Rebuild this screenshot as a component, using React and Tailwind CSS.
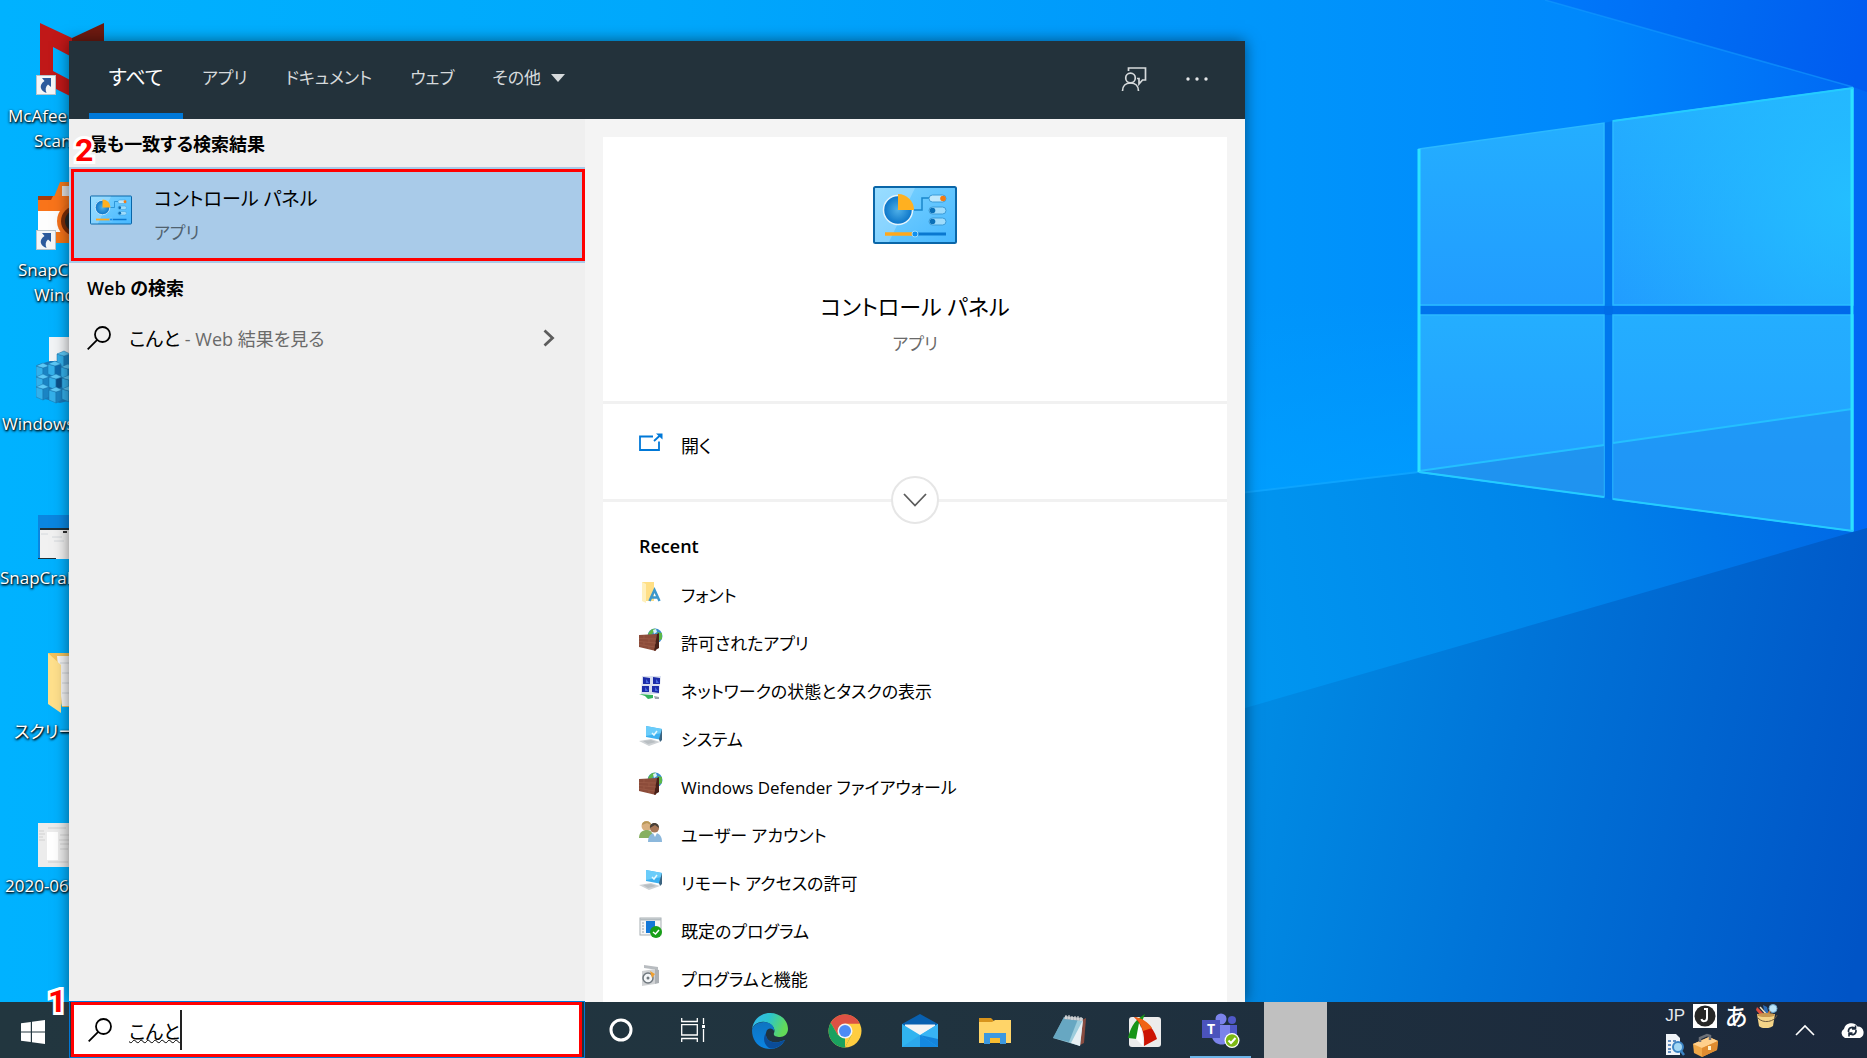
import React from "react";

const FONT = "font-['Open_Sans','Noto_Sans_CJK_JP',sans-serif] [font-feature-settings:'palt']";

function Wallpaper() {
  return (
    <svg
      className="absolute inset-0 h-full w-full"
      viewBox="0 0 1867 1058"
      preserveAspectRatio="xMaxYMin slice"
      aria-hidden="true"
    >
      <defs>
        <linearGradient id="wBase" gradientUnits="userSpaceOnUse" x1="0" y1="0" x2="1867" y2="0">
          <stop offset="0" stopColor="#00b2ff" />
          <stop offset="0.35" stopColor="#00a8fc" />
          <stop offset="0.67" stopColor="#0096fb" />
          <stop offset="0.85" stopColor="#0088fc" />
          <stop offset="1" stopColor="#0068f4" />
        </linearGradient>
        <linearGradient id="wTop" gradientUnits="userSpaceOnUse" x1="1560" y1="0" x2="1860" y2="60">
          <stop offset="0" stopColor="#0078fa" />
          <stop offset="0.6" stopColor="#0068f2" />
          <stop offset="1" stopColor="#005cf0" />
        </linearGradient>
        <linearGradient id="wMid" gradientUnits="userSpaceOnUse" x1="1240" y1="600" x2="1860" y2="480">
          <stop offset="0" stopColor="#0096f0" />
          <stop offset="0.5" stopColor="#0085ea" />
          <stop offset="1" stopColor="#0068e6" />
        </linearGradient>
        <linearGradient id="wLow" gradientUnits="userSpaceOnUse" x1="1240" y1="820" x2="1860" y2="940">
          <stop offset="0" stopColor="#008be4" />
          <stop offset="0.4" stopColor="#0074d8" />
          <stop offset="1" stopColor="#0054c6" />
        </linearGradient>
        <linearGradient id="wGlow" gradientUnits="userSpaceOnUse" x1="0" y1="300" x2="0" y2="490">
          <stop offset="0" stopColor="#00a0ff" stopOpacity="0" />
          <stop offset="1" stopColor="#00a0ff" stopOpacity="0.7" />
        </linearGradient>
        <linearGradient id="wPane" x1="0" y1="0" x2="0" y2="1">
          <stop offset="0" stopColor="#24aeff" />
          <stop offset="1" stopColor="#219cff" />
        </linearGradient>
        <radialGradient id="wShine" gradientUnits="userSpaceOnUse" cx="1850" cy="200" r="260">
          <stop offset="0" stopColor="#24c4ff" stopOpacity="0.8" />
          <stop offset="1" stopColor="#24c4ff" stopOpacity="0" />
        </radialGradient>
      </defs>
      <rect width="1867" height="1058" fill="url(#wBase)" />
      <path d="M1545 0H1867V92L1853 87Z" fill="url(#wTop)" />
      <path d="M1100 300L1418 306V473L1100 510Z" fill="url(#wGlow)" />
      <path d="M1100 510L1418 473L1853 532L1867 528V1058H1100Z" fill="url(#wMid)" />
      <path d="M1100 750L1853 532L1867 528V1058H1100Z" fill="url(#wLow)" />
      <path d="M1545 0L1853 87" stroke="#139bff" strokeWidth="1.5" opacity="0.6" />
      <path d="M1604 123L1613 121V500L1604 498Z" fill="#0070e4" opacity="0.6" />
      <path d="M1418 306H1853V315H1418Z" fill="#0068e6" opacity="0.7" />
      <g fill="url(#wPane)" stroke="#2bb9ff" strokeWidth="1.5">
        <path d="M1419 149L1604 123V305H1419Z" />
        <path d="M1613 121L1853 88V305H1613Z" />
        <path d="M1419 315H1604V497L1419 472Z" />
        <path d="M1613 315H1853V531L1613 499Z" />
      </g>
      <path d="M1613 121L1853 88V305H1613Z" fill="url(#wShine)" />
      <path d="M1419 471L1604 446V497Z" fill="#1e8ee8" opacity="0.65" />
      <path d="M1613 443L1853 409V531L1613 499Z" fill="#1e8ef0" opacity="0.55" />
      <path d="M1240 493L1419 472" stroke="#16aaff" strokeWidth="2" opacity="0.6" />
      <path d="M1419 471L1604 445M1613 443L1852 409" stroke="#24c0ff" strokeWidth="2" />
      <path d="M1419 149V472M1852 88V531" stroke="#2ce2ff" strokeWidth="3" />
      <path d="M1419 472L1604 497M1613 499L1853 531M1613 121L1853 88" stroke="#24ccff" strokeWidth="2" fill="none" />
    </svg>
  );
}

function ShortcutArrow() {
  return (
    <svg x="0" y="0" width="20" height="20" viewBox="0 0 20 20">
      <rect x="0.5" y="0.5" width="19" height="19" fill="#f4f6f8" stroke="#b8c4cc" />
      <path d="M6 3H15V12L12 9.500C9.500 11.500 9 14.500 10.500 18C4 15.500 2.500 10 8.500 6Z" fill="#2c5a9c" />
    </svg>
  );
}

function McAfeeIcon() {
  return (
    <svg width="70" height="74" viewBox="0 0 70 74">
      <path d="M4 0L36 15V34L17 24V48L36 58V74L4 58Z" fill="#c01818" />
      <path d="M36 15L68 0V58L36 74V58L55 48V24L36 34Z" fill="#6e1a10" />
      <g transform="translate(0 52)"><ShortcutArrow /></g>
    </svg>
  );
}

function CameraIcon() {
  return (
    <svg width="70" height="70" viewBox="0 0 70 70">
      <path d="M18 16L24 1H40V16Z" fill="#f47a1c" />
      <rect x="26" y="5" width="12" height="12" fill="#e0e0e0" />
      <path d="M2 15H70V32H2Z" fill="#f9741a" />
      <path d="M2 15H17L15 19H2Z" fill="#a83c08" />
      <path d="M2 30H70V62H2Z" fill="#fdfdfd" />
      <path d="M20 51H70V62H20Z" fill="#f47416" />
      <circle cx="40" cy="40" r="19" fill="#f4701a" />
      <circle cx="40" cy="40" r="15" fill="#7a2c08" />
      <circle cx="40" cy="40" r="11" fill="#262626" />
      <g transform="translate(0 49)"><ShortcutArrow /></g>
    </svg>
  );
}

function Cube({ x, y, c = "#1a84c4" }) {
  return (
    <g transform={`translate(${x} ${y})`} stroke="#1a74ac" strokeWidth="0.5">
      <path d="M0 3L7 5V16L0 13Z" fill="#34b0ea" />
      <path d="M7 5L13 3V13L7 16Z" fill={c} />
      <path d="M0 3L7 0L13 3L7 5Z" fill="#5cc8f6" />
    </g>
  );
}

function RegistryIcon() {
  return (
    <svg width="70" height="68" viewBox="0 0 70 68">
      <path d="M13 0H62V60H13Z" fill="#f2f4f6" />
      <path d="M1 28L14 24H40V62L24 66L1 60Z" fill="#1878b8" />
      <Cube x="21" y="14" />
      <Cube x="0" y="26" /><Cube x="12" y="24" c="#0f6cb0" /><Cube x="25" y="27" />
      <Cube x="0" y="37" /><Cube x="13" y="37" c="#0b4f88" /><Cube x="26" y="38" c="#1470b0" />
      <Cube x="0" y="47" /><Cube x="13" y="50" /><Cube x="26" y="49" c="#0f6cb0" />
    </svg>
  );
}

function ShotThumb() {
  return (
    <svg width="60" height="44" viewBox="0 0 60 44">
      <rect width="60" height="44" fill="#0a86e0" />
      <rect x="2" y="13" width="58" height="31" fill="#f1f1f1" />
      <rect x="2" y="13" width="58" height="2" fill="#203038" />
      <rect x="25" y="16" width="4" height="2" fill="#303030" />
      <path d="M3 19H10M14 22H24M16 26H26" stroke="#d4d8dc" />
      <rect y="43" width="18" height="1" fill="#203038" />
    </svg>
  );
}

function FolderIcon() {
  return (
    <svg width="48" height="60" viewBox="0 0 48 60">
      <path d="M0 0H46V54H14Z" fill="#f2c25c" />
      <path d="M9 3H46V53H14Z" fill="#f5f5f5" />
      <path d="M12 10H30M14 20H30M14 30H30M14 40H30" stroke="#cfd4d8" />
      <path d="M0 0L13 12V60L0 51Z" fill="#ffe08c" />
    </svg>
  );
}

function DocThumb() {
  return (
    <svg width="60" height="44" viewBox="0 0 60 44">
      <rect width="60" height="44" fill="#ececec" />
      <rect x="9" y="9" width="11" height="28" fill="#fff" />
      <path d="M1 8H6M1 11H7M1 14H5M1 17H7M10 5H28M22 12H34M21 17H34M22 21H34M22 26H30M10 39H30" stroke="#d0d0d0" />
    </svg>
  );
}

const desktopIcons = [
  { lines: ["McAfee Security", "Scan Plus"], pads: ["pl-2", "pl-[34px]"], icon: <McAfeeIcon />, left: "pl-9" },
  { lines: ["SnapCrab for", "Windows"], pads: ["pl-[18px]", "pl-[34px]"], icon: <CameraIcon />, left: "pl-9" },
  { lines: ["Windows 10"], pads: ["pl-[2px]"], icon: <RegistryIcon />, left: "pl-9" },
  { lines: ["SnapCrab_N"], pads: ["pl-0"], icon: <ShotThumb />, left: "pl-[38px]" },
  { lines: ["スクリーンショット"], pads: ["pl-[14px]"], icon: <FolderIcon />, left: "pl-12" },
  { lines: ["2020-06-24"], pads: ["pl-[5px]"], icon: <DocThumb />, left: "pl-[38px]" },
];

function DesktopIcons() {
  return (
    <ul className="relative flex w-[110px] flex-col overflow-hidden pt-[18px]">
      {desktopIcons.map((d) => (
        <li key={d.lines[0]} className="flex h-[154px] flex-col">
          <div className={`flex h-[85px] items-end pb-[6px] ${d.left}`}>
            <div className="shrink-0">{d.icon}</div>
          </div>
          {d.lines.map((l, i) => (
            <span
              key={l}
              className={`whitespace-nowrap text-[17px] leading-[25px] text-white [text-shadow:1px_1px_2px_#000,0_1px_3px_#000] ${d.pads[i]}`}
            >
              {l}
            </span>
          ))}
        </li>
      ))}
    </ul>
  );
}

function ControlPanelIcon({ className }) {
  return (
    <svg className={className} viewBox="0 0 84 58" aria-hidden="true">
      <defs>
        <linearGradient id="cpBg" x1="0" y1="0" x2="1" y2="1">
          <stop offset="0" stopColor="#7ed4ff" />
          <stop offset="1" stopColor="#48b8ff" />
        </linearGradient>
        <radialGradient id="cpPie">
          <stop offset="0" stopColor="#4fb0e8" />
          <stop offset="1" stopColor="#0a74c8" />
        </radialGradient>
      </defs>
      <rect x="1" y="1" width="82" height="56" rx="1.500" fill="url(#cpBg)" stroke="#0a66a8" strokeWidth="2" />
      <path d="M2 2H42L16 56H2Z" fill="#fff" opacity="0.22" />
      <circle cx="25" cy="24" r="14.500" fill="url(#cpPie)" stroke="#e4f4fc" strokeWidth="1.500" />
      <path d="M25 24V8A16 16 0 0 1 41 24Z" fill="#ffb020" />
      <path d="M41 24H49V12H56" stroke="#1a86cc" strokeWidth="1.500" fill="none" />
      <g stroke="#3c9cd8" strokeWidth="1">
        <rect x="56" y="9" width="17" height="7" rx="3.500" fill="#bfe8fc" />
        <rect x="56" y="21" width="17" height="7" rx="3.500" fill="#9edcfc" />
        <rect x="56" y="32" width="17" height="7" rx="3.500" fill="#9edcfc" />
      </g>
      <circle cx="70" cy="12.500" r="2.800" fill="#f47a10" />
      <circle cx="59.500" cy="24.500" r="2.800" fill="#0a70b8" />
      <circle cx="59.500" cy="35.500" r="2.800" fill="#0a70b8" />
      <path d="M12 48H42" stroke="#ffa81c" strokeWidth="3.500" />
      <path d="M42 48H73" stroke="#0a78d0" strokeWidth="3" />
      <circle cx="42" cy="48" r="3" fill="#1090f0" stroke="#9edcfc" />
    </svg>
  );
}

function SearchIcon() {
  return (
    <svg className="h-6 w-6 shrink-0" viewBox="0 0 24 24" fill="none" stroke="#000" strokeWidth="1.800" aria-hidden="true">
      <circle cx="15.500" cy="8.500" r="7.500" />
      <path d="M10.200 13.800L0.700 23.300" />
    </svg>
  );
}

function StepMark({ children }) {
  return (
    <span
      aria-hidden="true"
      className="block font-['Roboto',sans-serif] text-[32px] font-bold leading-[30px] text-[#ff0000] [-webkit-text-stroke:6px_#fff] [paint-order:stroke_fill]"
    >
      {children}
    </span>
  );
}

const tabs = ["すべて", "アプリ", "ドキュメント", "ウェブ"];

function PanelHeader() {
  return (
    <header className="flex h-[78px] shrink-0 items-stretch bg-[#23323b] pl-5 pr-9 text-[17px] text-[#d6dadc]">
      <nav className="flex flex-1">
        {tabs.map((t, i) => (
          <button
            key={t}
            type="button"
            className={
              i === 0
                ? "w-[94px] border-b-[6px] border-[#0078d7] pt-[2px] text-xl text-white"
                : "border-b-[6px] border-transparent px-[19px] pt-[2px]"
            }
          >
            {t}
          </button>
        ))}
        <button type="button" className="flex items-center gap-[10px] border-b-[6px] border-transparent px-[19px] pt-[2px]">
          その他
          <svg width="14" height="8" viewBox="0 0 14 8"><path d="M0 0H14L7 8Z" fill="#d6dadc" /></svg>
        </button>
      </nav>
      <div className="flex items-center gap-[38px] pb-[2px]">
        <button type="button" aria-label="フィードバック">
          <svg width="26" height="26" viewBox="0 0 26 26" fill="none" stroke="#d6dadc" strokeWidth="1.700">
            <circle cx="9.500" cy="12" r="4.800" />
            <path d="M1.500 25C1.500 20 4.800 17 9.500 17S17.500 20 17.500 25M7.500 5V2H24.500V14H21.500L18 18V12.500H16" />
          </svg>
        </button>
        <button type="button" aria-label="オプション">
          <svg width="24" height="6" viewBox="0 0 24 6" fill="#e4e6e8">
            <circle cx="3" cy="3" r="1.700" /><circle cx="12" cy="3" r="1.700" /><circle cx="21" cy="3" r="1.700" />
          </svg>
        </button>
      </div>
    </header>
  );
}

function ResultsPane() {
  return (
    <section className="w-[516px] shrink-0 bg-[#efefef]">
      <div className="relative">
        <h2 className="h-12 pl-5 text-lg font-bold leading-[50px]">最も一致する検索結果</h2>
        <div className="absolute left-[6px] top-4"><StepMark>2</StepMark></div>
      </div>
      <div className="bg-[#a9cbe9] py-[2px] pl-[2px]">
        <button type="button" className="flex h-[92px] w-full items-center gap-[22px] border-[3px] border-[#ff0000] pl-4 text-left">
          <ControlPanelIcon className="mb-[10px] h-[30px] w-[42px]" />
          <span className="flex flex-col">
            <span className="text-[19px] leading-9">コントロール パネル</span>
            <span className="text-[17px] leading-8 text-[#50626f]">アプリ</span>
          </span>
        </button>
      </div>
      <h2 className="h-12 pl-[18px] text-lg font-semibold leading-[50px]">Web の検索</h2>
      <button type="button" className="flex h-[54px] w-full items-center pl-[18px] pr-[30px] text-left">
        <SearchIcon />
        <span className="flex-1 pl-[18px] pt-[2px] text-[19px]">
          こんと <span className="text-lg text-[#6a6a6a]">- Web 結果を見る</span>
        </span>
        <svg width="12" height="18" viewBox="0 0 12 18" fill="none" stroke="#5c5c5c" strokeWidth="2.800">
          <path d="M1.500 1.500L9.500 9L1.500 16.500" />
        </svg>
      </button>
    </section>
  );
}

function FontsIcon() {
  return (
    <svg width="24" height="24" viewBox="0 0 24 24">
      <path d="M3 2H15V21H3Z" fill="#ffdf85" />
      <path d="M3 2L7 4V23L3 21Z" fill="#fff0bd" />
      <path d="M10.500 21L15.500 10L20.500 21M12.500 17.500H18.500" fill="none" stroke="#3c98cc" strokeWidth="2.500" />
    </svg>
  );
}
function FirewallIcon() {
  return (
    <svg width="24" height="24" viewBox="0 0 24 24">
      <circle cx="16" cy="8" r="7.500" fill="#3a8cd0" />
      <path d="M9 6C11 1 15 0 17 1L14 5L11 8ZM18 4L23 5V11L19 13L20 8Z" fill="#5cb848" />
      <path d="M14 2L17 1L18 4L15 6Z" fill="#d8f0fa" />
      <path d="M0 7L18 6L17 23L0 19Z" fill="#8c4c3a" />
      <path d="M18 6L20 5V20L15 23Z" fill="#482018" />
      <path d="M0 10.500L17 11M0 13.500L17 15M0 16.500L16 19M5 7V11M10 11V15M5 14V17M10 18V21" stroke="#9c5c48" strokeWidth="0.800" />
    </svg>
  );
}
function NetworkIcon() {
  return (
    <svg width="24" height="24" viewBox="0 0 24 24">
      <path d="M3 0H22L20 18H2Z" fill="#c8d0e8" opacity="0.7" />
      <path d="M4 1L11 2V8L4 8ZM14 1L21 2V8L14 8ZM3 10L10 10V16L3 16ZM13 10L20 10V17L13 16Z" fill="#1c2ca8" />
      <path d="M7 3L10 7H7ZM17 3L20 7H17ZM6 11L9 15H6ZM16 11L19 15H16Z" fill="#4868e0" />
      <path d="M0 18L14 19V22L9 23L6 20Z" fill="#34b45c" />
      <path d="M15 20L20 21V23L16 23Z" fill="#9ca4ac" />
    </svg>
  );
}
function SystemIcon() {
  return (
    <svg width="24" height="24" viewBox="0 0 24 24">
      <path d="M7 2L23 5V16L7 13Z" fill="#3cb0f0" />
      <path d="M7 2L23 5V9L7 12Z" fill="#6accfa" />
      <path d="M13 9L15 11L18 7" stroke="#e4f8ff" strokeWidth="1.500" fill="none" />
      <path d="M23 5V16L21 18L20 15Z" fill="#3c6480" />
      <path d="M0 17L12 15L21 18L10 22Z" fill="#cfd3d6" />
      <path d="M4 17L12 16L17 18L9 20Z" fill="#b8bec2" />
    </svg>
  );
}
function UsersIcon() {
  return (
    <svg width="24" height="24" viewBox="0 0 24 24">
      <circle cx="7.500" cy="6" r="5" fill="#d8b080" />
      <path d="M3 5C3 0 12 0 12 5L8 3Z" fill="#b89858" />
      <path d="M0 18C0 12 4 10 8 10S14 13 14 18Z" fill="#86b060" />
      <circle cx="15.500" cy="8" r="4.600" fill="#a87858" />
      <path d="M11 8C10 2 20 1 20 8L16 5Z" fill="#484038" />
      <path d="M9 22C9 16 12 13 16 13S23 16 23 22Z" fill="#8cb8dc" />
      <path d="M14 13L16 17L18 13Z" fill="#fff" />
    </svg>
  );
}
function DefaultsIcon() {
  return (
    <svg width="24" height="24" viewBox="0 0 24 24">
      <rect x="1" y="2" width="21" height="17" fill="#f6f6f6" stroke="#a8b0b4" />
      <path d="M1 3.500H22" stroke="#b4bcc0" strokeWidth="2" />
      <path d="M3 7H5M3 10H5M3 13H5M3 16H5" stroke="#98a4ac" />
      <rect x="7" y="5" width="9" height="12" fill="#1478d8" />
      <circle cx="17" cy="16" r="6" fill="#18a018" />
      <path d="M14 16L16.500 18L20 14" stroke="#fff" strokeWidth="1.500" fill="none" />
    </svg>
  );
}
function ProgramsIcon() {
  return (
    <svg width="24" height="24" viewBox="0 0 24 24">
      <path d="M5 1L19 3V6L5 4Z" fill="#b8bcc0" />
      <path d="M3 7L16 5V20L3 22Z" fill="#d0d2d4" />
      <path d="M16 5L20 6V19L16 20Z" fill="#acb0b4" />
      <circle cx="9" cy="14" r="5" fill="#f4f6f8" stroke="#70787e" strokeWidth="1.500" />
      <circle cx="9" cy="14" r="1.500" fill="#70787e" />
      <path d="M11 7L16 10L13 14Z" fill="#f0a030" />
    </svg>
  );
}

const recent = [
  ["フォント", FontsIcon],
  ["許可されたアプリ", FirewallIcon],
  ["ネットワークの状態とタスクの表示", NetworkIcon],
  ["システム", SystemIcon],
  ["Windows Defender ファイアウォール", FirewallIcon],
  ["ユーザー アカウント", UsersIcon],
  ["リモート アクセスの許可", SystemIcon],
  ["既定のプログラム", DefaultsIcon],
  ["プログラムと機能", ProgramsIcon],
];

function DetailPane() {
  return (
    <section className="flex min-w-0 flex-1 flex-col bg-[#f4f4f4] px-[18px] pt-[18px]">
      <div className="flex flex-1 flex-col bg-white">
        <div className="flex h-[264px] shrink-0 flex-col items-center pt-[49px]">
          <ControlPanelIcon className="h-[58px] w-[84px]" />
          <h1 className="mt-11 text-[22px] leading-9">コントロール パネル</h1>
          <p className="mt-1 text-[17px] leading-8 text-[#6a6a6a]">アプリ</p>
        </div>
        <div className="relative h-[101px] shrink-0 border-y-[3px] border-[#f1f1f1]">
          <button type="button" className="flex h-[84px] w-full items-center gap-[18px] pl-9 text-lg">
            <svg className="mb-2" width="24" height="18" viewBox="0 0 24 18" fill="none" stroke="#0078d7" strokeWidth="1.800">
              <path d="M14 3.500H1V17H20V8.500M15 8L21.500 2" />
              <path d="M17 0.500H23.500V6.500Z" fill="#0078d7" stroke="none" />
            </svg>
            開く
          </button>
          <button
            type="button"
            aria-label="展開"
            className="absolute -bottom-[25px] left-1/2 flex h-12 w-12 -translate-x-1/2 items-center justify-center rounded-full border-2 border-[#e6e6e6] bg-white"
          >
            <svg width="24" height="14" viewBox="0 0 24 14" fill="none" stroke="#5c5c5c" strokeWidth="1.800">
              <path d="M1 1L12 12.500L23 1" />
            </svg>
          </button>
        </div>
        <h2 className="pl-9 pt-7 text-lg font-semibold leading-8">Recent</h2>
        <ul className="flex flex-col pt-[10px]">
          {recent.map(([label, Icon]) => (
            <li key={label}>
              <button type="button" className="flex h-12 w-full items-center gap-[18px] pl-9 text-left text-[17px]">
                <span className="mb-2"><Icon /></span>
                {label}
              </button>
            </li>
          ))}
        </ul>
      </div>
    </section>
  );
}

function EdgeIcon() {
  return (
    <svg width="36" height="36" viewBox="0 0 36 36">
      <defs>
        <linearGradient id="edA" x1="0" y1="0" x2="1" y2="0.300">
          <stop offset="0" stopColor="#34b8f4" /><stop offset="0.500" stopColor="#2cc4cc" /><stop offset="1" stopColor="#62da58" />
        </linearGradient>
        <linearGradient id="edB" x1="0" y1="0" x2="0" y2="1">
          <stop offset="0" stopColor="#0e74c0" /><stop offset="1" stopColor="#0a84e4" />
        </linearGradient>
      </defs>
      <path d="M0 17C1 6 9 0 18 0C29 0 36 8 36 16C36 21 32 24 28 24C24 24 21 23 22 20C24 16 20 10 13 9C6 8 1 12 0 17Z" fill="url(#edA)" />
      <path d="M0 17C1 12 6 9 12 9C19 9 23 14 22 18C21 15 15 14 14 20C13 27 20 31 27 29L33 27C30 33 24 36 18 36C7 36 0 28 0 17Z" fill="url(#edB)" />
      <path d="M14 20C13 27 20 31 27 29L33 27C29 34 21 37 17 35C11 31 11 24 14 20Z" fill="#0a4c98" />
    </svg>
  );
}
function ChromeIcon() {
  return (
    <svg width="34" height="34" viewBox="0 0 34 34">
      <circle cx="17" cy="17" r="16.500" fill="#ffcd40" />
      <path d="M2.700 8.800A16.500 16.500 0 0 1 31.300 8.800L31.800 9.800H17L9.900 21Z" fill="#dd5144" />
      <path d="M2.700 8.800A16.500 16.500 0 0 0 17 33.500L23.500 21L17 24L9.900 21Z" fill="#1aa15f" />
      <path d="M17 33.500L23.700 20.500L17 24Z" fill="#ffcd40" />
      <circle cx="17" cy="17" r="7.500" fill="#f4f4f4" />
      <circle cx="17" cy="17" r="6" fill="#4c8bf5" />
    </svg>
  );
}
function MailIcon() {
  return (
    <svg width="36" height="34" viewBox="0 0 36 34">
      <path d="M0 10L18 0L36 10V20H0Z" fill="#0860b0" />
      <path d="M3 10.500H33V24H3Z" fill="#f4f4f4" />
      <path d="M0 10L18 21L36 10V33H0Z" fill="#30b4f0" />
      <path d="M18 21.500L36 10V33Z" fill="#38b4f4" />
      <path d="M18 21L36 33H0Z" fill="#2ca8ec" />
      <path d="M18 21L36 33V25Z" fill="#1484dc" />
      <path d="M18 21L36 33H18Z" fill="#1488e0" />
    </svg>
  );
}
function ExplorerIcon() {
  return (
    <svg width="32" height="28" viewBox="0 0 32 28">
      <path d="M0 1H12L15 4V8H0Z" fill="#d8941c" />
      <path d="M0 5H13L16 3H32V26H0Z" fill="#ffd468" />
      <path d="M5 16H27V27H21V21H11V27H5Z" fill="#3c98e0" />
      <path d="M11 21H21V26H11Z" fill="#f8bc30" />
    </svg>
  );
}
function NotepadIcon() {
  return (
    <svg width="34" height="32" viewBox="0 0 34 32">
      <path d="M29 5L33 3L31 28L27 30Z" fill="#884c40" />
      <path d="M11 2L30 4L27 31L0 23Z" fill="#9cccdc" />
      <path d="M11 2L25 4L16 27L0 23Z" fill="#4c94b4" opacity="0.650" />
      <path d="M30 5L27 31L18 28Z" fill="#e8f0f4" />
      <path d="M12 1L30 3L30 6L11 4Z" fill="#b8bcc0" />
      <path d="M13 0V4M16 0V4M19 1V5M22 1V5M25 1V5M28 2V6" stroke="#e8e8e8" strokeWidth="1" />
    </svg>
  );
}
function CaptureIcon() {
  return (
    <svg width="34" height="34" viewBox="0 0 34 34">
      <rect x="1" y="3" width="32" height="30" rx="3" fill="#ececec" />
      <path d="M0 24C2 15 6 7 14 2L17 0L15 5L9 25Z" fill="#189418" />
      <path d="M6 3C14 4 25 11 29 25L16 32C17 20 14 10 6 3Z" fill="#cc1404" />
      <path d="M6 3C14 4 20 8 24 14L15 17C13 10 10 6 6 3Z" fill="#f06414" />
      <path d="M11 9C14 14 15 24 15 32L8 25Z" fill="#fff" />
    </svg>
  );
}
function TeamsIcon() {
  return (
    <svg width="38" height="36" viewBox="0 0 38 36">
      <circle cx="19" cy="6" r="5.500" fill="#7b83eb" />
      <circle cx="30" cy="7" r="4" fill="#5059c9" />
      <path d="M25 12H35V22C35 27 30 29 25 26Z" fill="#5059c9" />
      <path d="M10 12H28V24C28 34 12 34 10 24Z" fill="#7b83eb" />
      <rect y="7" width="18" height="18" fill="#4b53bc" />
      <text x="9" y="21" textAnchor="middle" fontFamily="Open Sans" fontWeight="700" fontSize="14" fill="#fff">T</text>
      <circle cx="30" cy="27.500" r="7.500" fill="#fff" />
      <circle cx="30" cy="27.500" r="6.200" fill="#7cb814" />
      <path d="M26.500 27.500L29 30L33.500 25" fill="none" stroke="#fff" strokeWidth="2" />
    </svg>
  );
}
function TaskViewIcon() {
  return (
    <svg width="24" height="24" viewBox="0 0 24 24" fill="none" stroke="#fff" strokeWidth="1.300">
      <path d="M0.700 0V3.500H16.300V0M0.700 24V20.500H16.300V24M0.700 6.700H16.300V17H0.700ZM22.500 0V6M22.500 11V24" />
      <path d="M21 7H24V10H21Z" fill="#fff" stroke="none" />
    </svg>
  );
}

const apps = [
  ["Microsoft Edge", EdgeIcon],
  ["Google Chrome", ChromeIcon],
  ["メール", MailIcon],
  ["エクスプローラー", ExplorerIcon],
  ["メモ帳", NotepadIcon],
  ["キャプチャ", CaptureIcon],
];

function Tray() {
  return (
    <div className="ml-auto flex items-center">
      <div className="flex flex-col gap-[5px] pt-px">
        <div className="flex h-6 items-center gap-2">
          <span className="font-['Liberation_Sans',sans-serif] text-[17px] text-[#e4e8ec]">JP</span>
          <svg width="24" height="24" viewBox="0 0 24 24">
            <rect width="24" height="24" fill="#fff" />
            <circle cx="12" cy="12" r="10.500" fill="#262626" />
            <path d="M14 5V14C14 18 9 18 8.500 15M11 5H15" stroke="#fff" strokeWidth="2" fill="none" />
          </svg>
          <span className="w-[22px] text-[23px] font-medium leading-6 text-white">あ</span>
          <svg width="24" height="24" viewBox="0 0 24 24">
            <path d="M2 3L10 11L7 13L1 6Z" fill="#e04c3c" /><path d="M8 1L12 3L14 11L10 11Z" fill="#2c6cb8" />
            <path d="M5 3L12 11" stroke="#f0e0c0" strokeWidth="1.500" />
            <circle cx="18" cy="4.500" r="4" fill="#bce4f8" stroke="#6ca8d0" /><path d="M15 7L12 12" stroke="#c87838" strokeWidth="2" />
            <path d="M2 10H20L18 22C14 25 7 25 4 22Z" fill="#f4d488" />
            <ellipse cx="11" cy="11" rx="9" ry="2" fill="#c89850" />
            <path d="M3 14C8 20 20 18 22 11" fill="none" stroke="#705c40" />
          </svg>
        </div>
        <div className="flex h-6 gap-2">
          <svg width="20" height="24" viewBox="0 0 20 24">
            <path d="M1 1H11L15 5V22H1Z" fill="#f0f4f8" />
            <path d="M3 8H6M8 8H11M3 12H6M3 16H6M3 19H6" stroke="#3870b0" strokeWidth="1.500" />
            <circle cx="13" cy="14" r="5" fill="#a4d8f4" stroke="#3c84c4" strokeWidth="2" />
            <path d="M16 18L19 22" stroke="#3c84c4" strokeWidth="2.500" />
          </svg>
          <svg width="25" height="24" viewBox="0 0 25 24">
            <path d="M0 11L16 4L25 8L24 17L9 24L1 20Z" fill="#f0a848" />
            <path d="M0 11L16 4L25 8L9 15Z" fill="#ffd08c" />
            <path d="M9 15L25 8L24 17L9 24Z" fill="#e08c30" />
            <path d="M7 9V5L14 2L17 3V7" stroke="#6c7078" strokeWidth="2.500" fill="none" />
            <path d="M15 13H18V17H15Z" fill="#fff0c8" />
          </svg>
        </div>
      </div>
      <button type="button" aria-label="隠れているインジケーターを表示" className="ml-4">
        <svg width="20" height="12" viewBox="0 0 20 12" fill="none" stroke="#fff" strokeWidth="1.600"><path d="M1 11L10 2L19 11" /></svg>
      </button>
      <button type="button" aria-label="同期" className="ml-[25px] mr-[2px]">
        <svg width="25" height="17" viewBox="0 0 25 17">
          <path d="M5 16A5 5 0 0 1 4 7A7.500 7.500 0 0 1 17.500 4.500A6 6 0 0 1 20 16Z" fill="#fff" />
          <path d="M8.500 10C8 6 12 4 15 6.500M15.500 3.500V7H12M16 8C16.500 12 12.500 14 9.500 11.500M9 14.500V11H12.500" fill="none" stroke="#1c2a3c" strokeWidth="1.600" />
        </svg>
      </button>
    </div>
  );
}

function Taskbar() {
  return (
    <footer className="relative flex h-14 shrink-0 items-stretch bg-gradient-to-r from-[#22363f] via-[#20333f] to-[#1b283c]">
      <div className="relative flex w-[69px] shrink-0">
        <button type="button" aria-label="スタート" className="flex flex-1 items-center justify-center pr-1 pt-1">
          <svg className="shrink-0" width="24" height="24" viewBox="0 0 24 24" fill="#fff">
            <path d="M0 3.300L9.800 2V11.400H0ZM11 1.800L24 0V11.400H11ZM0 12.600H9.800V22L0 20.700ZM11 12.600H24V24L11 22.200Z" />
          </svg>
        </button>
        <div className="absolute -top-4 left-12"><StepMark>1</StepMark></div>
      </div>
      <label className="-mt-px flex w-[516px] shrink-0 border border-[#0078d7] pl-px pr-[2px]">
        <span className="flex flex-1 items-center border-[3px] border-[#ff0000] bg-white pl-[14px]">
          <span className="sr-only">検索</span>
          <SearchIcon />
          <input
            type="text"
            defaultValue="こんと"
            className="ml-[17px] bg-transparent p-0 pt-1 text-[19px] leading-9 text-black underline decoration-wavy decoration-1 underline-offset-0 outline-none [field-sizing:content]"
          />
          <span className="h-10 w-[2px] bg-[#222]" />
        </span>
      </label>
      <button type="button" aria-label="Cortana" className="flex w-[72px] shrink-0 items-center justify-center">
        <svg width="24" height="24" viewBox="0 0 24 24"><circle cx="12" cy="12" r="10" fill="none" stroke="#fff" strokeWidth="3" /></svg>
      </button>
      <button type="button" aria-label="タスク ビュー" className="mr-[3px] flex w-[72px] shrink-0 items-center justify-center"><TaskViewIcon /></button>
      {apps.map(([name, Icon]) => (
        <button key={name} type="button" aria-label={name} className="flex w-[75px] shrink-0 items-center justify-center pt-px"><Icon /></button>
      ))}
      <button type="button" aria-label="Microsoft Teams" className="ml-2 mr-[13px] flex w-[61px] shrink-0 items-center justify-center border-b-2 border-[#6cb4e8] pt-1">
        <TeamsIcon />
      </button>
      <div className="w-[63px] shrink-0 bg-[#c0c0c0]" />
      <Tray />
    </footer>
  );
}

export default function App() {
  return (
    <div className={`relative flex h-screen flex-col overflow-hidden text-black ${FONT}`}>
      <Wallpaper />
      <main className="relative min-h-0 flex-1">
        <DesktopIcons />
        <div className="absolute bottom-0 left-[69px] top-[41px] flex w-[63%] flex-col overflow-hidden shadow-[0_0_14px_rgba(0,0,0,0.5)]">
          <PanelHeader />
          <div className="flex min-h-0 flex-1">
            <ResultsPane />
            <DetailPane />
          </div>
        </div>
      </main>
      <Taskbar />
    </div>
  );
}
